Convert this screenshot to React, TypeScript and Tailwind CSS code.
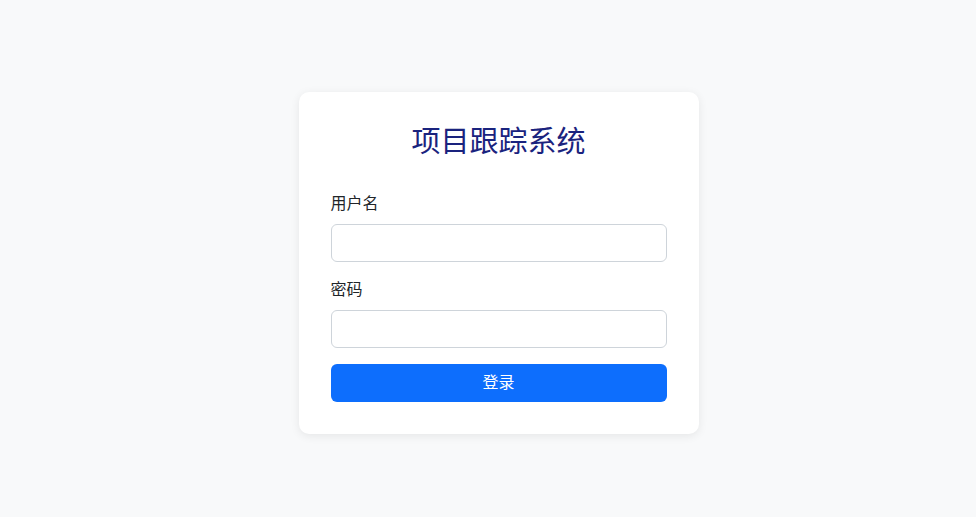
import React, { useState } from 'react';

const App: React.FC = () => {
  const [username, setUsername] = useState('');
  const [password, setPassword] = useState('');

  return (
    <div
      className="min-h-screen w-full bg-[#f8f9fa] flex items-center justify-center pl-[21px] pt-[9px] text-[#212529]"
      style={{ fontFamily: '"Liberation Sans", "Noto Sans CJK SC", sans-serif' }}
    >
      <div className="w-[400px] bg-white rounded-[10px] shadow-[0_2px_10px_rgba(0,0,0,0.08)] px-8 pt-[33px] pb-8">
        <h2 className="text-center text-[29px] leading-[1.2] text-[#1a237e] mb-8">项目跟踪系统</h2>

        <div className="mb-4">
          <label className="block text-base leading-6 mb-2">用户名</label>
          <input
            type="text"
            value={username}
            onChange={(e) => setUsername(e.target.value)}
            className="block w-full h-[38px] px-3 border border-[#ced4da] rounded-md outline-none"
          />
        </div>

        <div className="mb-4">
          <label className="block text-base leading-6 mb-2">密码</label>
          <input
            type="password"
            value={password}
            onChange={(e) => setPassword(e.target.value)}
            className="block w-full h-[38px] px-3 border border-[#ced4da] rounded-md outline-none"
          />
        </div>

        <button className="w-full h-[38px] bg-[#0d6efd] text-white text-base rounded-md">登录</button>
      </div>
    </div>
  );
};

export default App;
